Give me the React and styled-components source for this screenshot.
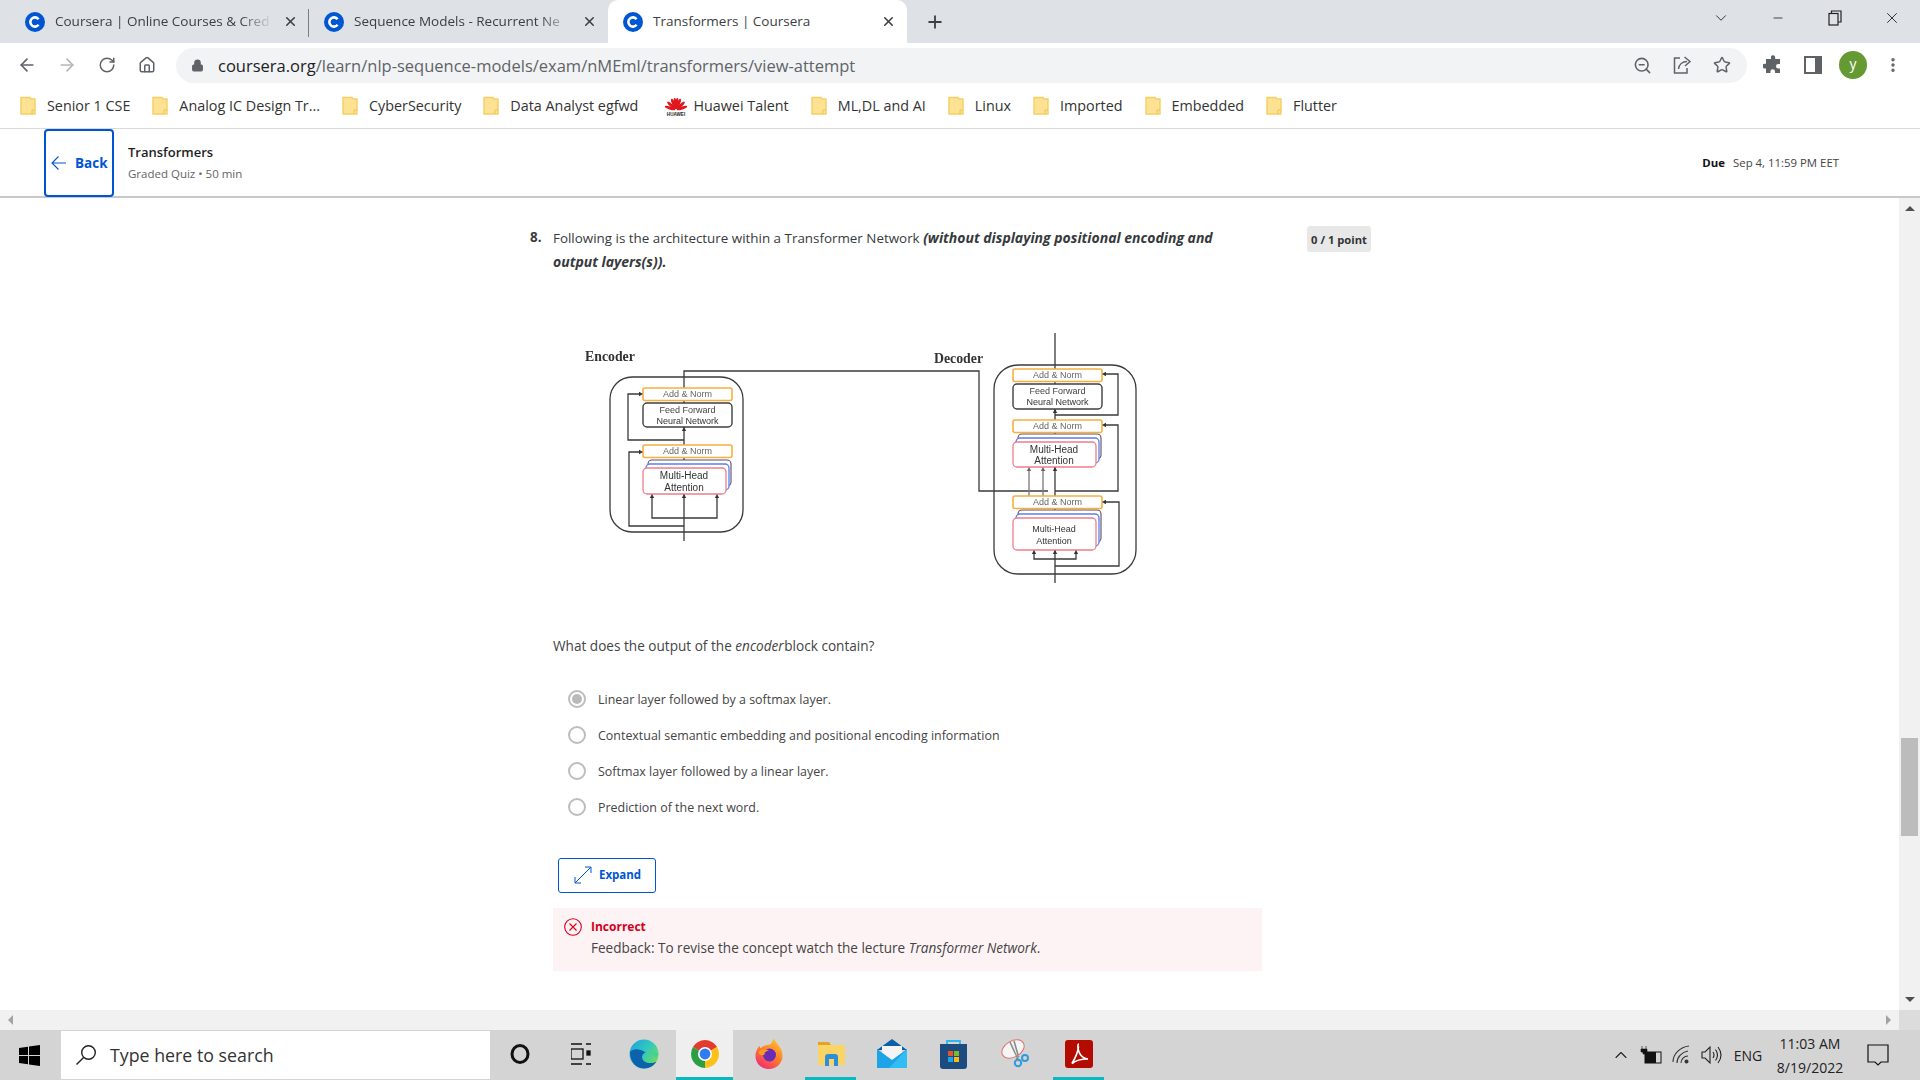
import React from "react";
import styled, { createGlobalStyle } from "styled-components";
import { ArrowLeft, ArrowRight, RotateCw, Home, Lock, ZoomOut, Star, MoreVertical, X, Plus, Minus, ChevronDown, ChevronUp } from "lucide-react";

const Global = createGlobalStyle`
  html, body { margin: 0; padding: 0; background: #fff; overflow: hidden; }
  * { box-sizing: border-box; }
`;
const Screen = styled.div`
  width: 1920px; height: 1080px; display: flex; flex-direction: column; overflow: hidden;
  font-family: "Open Sans", "Liberation Sans", sans-serif; color: #333;
`;
const TabStrip = styled.div`
  height: 43px; background: #dee1e6; display: flex; align-items: stretch; padding-left: 10px; flex: none;
`;
const Tab = styled.div`
  width: 299px; display: flex; align-items: center; padding-left: 15px; padding-right: 11px; gap: 10px;
  background: ${p => p.$active ? "#fff" : "transparent"};
  border-radius: ${p => p.$active ? "10px 10px 0 0" : "0"};
  position: relative;
  font-size: 13.5px; color: #3c4043;
`;
const TabSep = styled.div`
  width: 1px; height: 28px; background: #7a7d82; position: absolute; right: 0; top: 9px;
`;
const TabTitle = styled.span`
  flex: 1; min-width: 0; white-space: nowrap; padding-bottom: 2px;
  -webkit-mask-image: ${p => p.$fade ? "linear-gradient(90deg,#000 85%,transparent)" : "none"};
  mask-image: ${p => p.$fade ? "linear-gradient(90deg,#000 85%,transparent)" : "none"};
`;
const NewTab = styled.div`
  width: 58px; display: flex; align-items: center; justify-content: center; color: #3c4043; padding-right: 2px;
`;
const WindowControls = styled.div`
  margin-left: auto; display: flex; align-items: center; height: 36px; color: #222;
`;
const WinBtn = styled.div`
  width: 57px; display: flex; align-items: center; justify-content: center;
`;
const ToolBar = styled.div`
  height: 44px; background: #fff; display: flex; align-items: center; padding-left: 7px; flex: none;
`;
const NavBtn = styled.div`
  width: 40px; display: flex; align-items: center; justify-content: center;
  color: ${p => p.$off ? "#b4b6b9" : "#5f6368"};
`;
const Omnibox = styled.div`
  width: 1571px; height: 35px; margin-left: 9px; border-radius: 18px; background: #f1f3f4;
  display: flex; align-items: center; padding-left: 15px; color: #5f6368; flex: none;
`;
const Url = styled.div`
  margin-left: 14px; font-size: 16.5px; color: #5f6368; white-space: nowrap;
  & b { font-weight: 400; color: #202124; }
`;
const OmniIcons = styled.div`
  margin-left: auto; display: flex; padding-right: 5px; color: #5f6368;
`;
const OmniIcon = styled.div`
  width: 40px; display: flex; justify-content: center; align-items: center;
`;
const ToolRight = styled.div`
  display: flex; align-items: center; color: #5f6368; margin-left: 6px;
`;
const Avatar = styled.div`
  width: 28px; height: 28px; border-radius: 50%; background: #659a33; color: #fff; font-size: 14px;
  display: flex; align-items: center; justify-content: center; padding-bottom: 3px;
`;
const Bookmarks = styled.div`
  height: 42px; background: #fff; border-bottom: 1px solid #dadada; display: flex; align-items: center;
  padding: 0 0 4px 20px; gap: 22px; flex: none;
`;
const Bookmark = styled.div`
  display: flex; align-items: center; gap: 11px; font-size: 14.35px; color: #333; white-space: nowrap;
`;
const HuaweiMark = styled.svg`
  flex: none; width: 22px; height: 22px; margin: 0 -5px 0 5px;
`;
const CourseHeader = styled.div`
  height: 69px; border-bottom: 2px solid #c9c9c9; display: flex; align-items: stretch; padding-left: 44px; padding-right: 81px; flex: none;
`;
const BackButton = styled.div`
  width: 70px; margin-bottom: -1px; border: 2px solid #0056d2; border-radius: 4px; display: flex; align-items: center; gap: 8px; padding-left: 5px;
  color: #0056d2; font-size: 13.5px; font-weight: 700;
`;
const HeaderTitles = styled.div`
  margin-left: 14px; display: flex; flex-direction: column; justify-content: center; gap: 3px;
`;
const HeaderTitle = styled.div`
  font-size: 13px; font-weight: 600; color: #1f1f1f; line-height: 20px;
`;
const HeaderSub = styled.div`
  font-size: 11.5px; color: #636363; line-height: 18px;
`;
const Due = styled.div`
  margin-left: auto; align-self: center; font-size: 11.4px; color: #444; padding-bottom: 1px;
  & b { color: #111; margin-right: 8px; }
`;
const Viewport = styled.div`
  flex: 1; min-height: 0; display: flex;
`;
const Scroller = styled.div`
  flex: 1; min-width: 0; padding: 28px 0 0 530px; background: #fff; overflow: hidden;
`;
const VBar = styled.div`
  width: 21px; background: #f1f1f1; display: flex; flex-direction: column; align-items: center; justify-content: space-between; padding: 8px 0 8px;
`;
const VTrack = styled.div`
  flex: 1; width: 100%; padding: 0 2px; padding-top: 527px;
`;
const VThumb = styled.div`
  height: 98px; background: #bcbcbc;
`;
const Triangle = styled.div`
  width: 0; height: 0; border-style: solid;
  border-color: transparent;
  ${p => p.$dir === "up" && "border-width: 0 5px 5px 5px; border-bottom-color: #505050;"}
  ${p => p.$dir === "down" && "border-width: 5px 5px 0 5px; border-top-color: #505050;"}
  ${p => p.$dir === "left" && "border-width: 5px 5px 5px 0; border-right-color: #a3a3a3;"}
  ${p => p.$dir === "right" && "border-width: 5px 0 5px 5px; border-left-color: #a3a3a3;"}
`;
const HBar = styled.div`
  height: 20px; background: #f1f1f1; display: flex; align-items: center; justify-content: space-between; padding-left: 8px; flex: none;
`;
const Corner = styled.div`
  width: 21px; height: 20px; background: #dcdcdc; margin-left: 8px;
`;
const HEnd = styled.div`
  display: flex; align-items: center;
`;
const QuestionRow = styled.div`
  width: 841px; display: flex; align-items: flex-start;
`;
const QNumber = styled.div`
  width: 23px; font-size: 13.4px; line-height: 23px; font-weight: 700; color: #373a3c;
`;
const QText = styled.div`
  width: 670px; font-size: 13.4px; line-height: 23px; color: #373a3c;
  & em { font-weight: 700; font-size: 14px; }
`;
const PointBadge = styled.div`
  margin-left: auto; width: 64px; height: 26px; background: #e8e8e8; border-radius: 3px; font-size: 11.2px; font-weight: 700; color: #333;
  display: flex; align-items: center; justify-content: center;
`;
const Diagram = styled.svg`
  display: block; width: 600px; height: 270px; margin: 46px 0 0 30px; filter: blur(0.55px);
`;
const DText = styled.text`
  font-family: "Liberation Sans", sans-serif; font-size: ${p => p.$s || 9}px; fill: ${p => p.$c || "#333"}; text-anchor: middle;
`;
const DLabel = styled.text`
  font-family: "Liberation Serif", serif; font-weight: 700; font-size: 13.8px; fill: #333; text-anchor: start;
`;
const Body = styled.div`
  margin-left: 23px;
`;
const Prompt = styled.div`
  margin-top: 45px; font-size: 13.6px; line-height: 22px; color: #444;
  & em { margin-right: -3px; }
`;
const Options = styled.div`
  margin-top: 24px; padding-left: 15px; display: flex; flex-direction: column;
`;
const Option = styled.div`
  height: 36px; display: flex; align-items: center; gap: 12px; font-size: 12.45px; color: #444;
`;
const Radio = styled.div`
  width: 18px; height: 18px; border-radius: 50%; border: 2px solid #bdbdbd; display: flex; align-items: center; justify-content: center; flex: none;
  &::after { content: ""; width: 10px; height: 10px; border-radius: 50%; background: ${p => p.$on ? "#b9b9b9" : "transparent"}; }
`;
const ExpandBtn = styled.div`
  margin: 33px 0 0 5px; width: 98px; height: 35px; border: 1px solid #0056d2; border-radius: 3px; display: flex; align-items: center; gap: 7px; padding: 0 0 2px 15px;
  color: #0056d2; font-size: 11.5px; font-weight: 700;
`;
const Feedback = styled.div`
  margin-top: 15px; width: 709px; height: 63px; background: #fdf3f4; padding: 8px 0 0 11px; display: grid; grid-template-columns: 18px 1fr; column-gap: 9px; align-items: center; align-content: start;
`;
const FeedTitle = styled.div`
  font-size: 12px; font-weight: 700; color: #d3001c; line-height: 22px;
`;
const FeedBody = styled.div`
  grid-column: 2; font-size: 13.55px; line-height: 21px; color: #444; white-space: nowrap;
`;
const Taskbar = styled.div`
  height: 50px; background: #d4d4d4; display: flex; align-items: stretch; flex: none;
`;
const StartBtn = styled.div`
  width: 61px; display: flex; align-items: center; justify-content: center; padding-right: 2px;
`;
const SearchBox = styled.div`
  width: 429px; margin: 1px 0; background: #fff; display: flex; align-items: center; padding-left: 14px; gap: 13px; font-size: 17.8px; color: #333;
`;
const Cell = styled.div`
  width: ${p => p.$w}px; margin-left: ${p => p.$ml || 0}px; position: relative; display: flex; align-items: center; justify-content: center;
  background: ${p => p.$active ? "#efefef" : "transparent"}; padding-bottom: 3px;
  ${p => p.$line && `&::after { content: ""; position: absolute; left: 0; right: 0; bottom: 0; height: 3px; background: #0cb7c4; }`}
`;
const Tray = styled.div`
  margin-left: auto; padding-right: 13px; display: flex; align-items: center; color: #222;
`;
const TrayItem = styled.div`
  width: ${p => p.$w}px; display: flex; align-items: center; justify-content: center; font-size: ${p => p.$fs || 14}px;
`;
const Clock = styled.div`
  width: 78px; font-size: 14px; line-height: 24px; text-align: center; color: #222; padding-top: 2px;
`;

const Favicon = () => (
  <svg width="20" height="20" viewBox="0 0 20 20" style={{ flex: "none" }}>
    <circle cx="10" cy="10" r="10" fill="#0056d2" />
    <path d="M13.6 7.2A4.6 4.6 0 1 0 13.6 12.8" fill="none" stroke="#fff" strokeWidth="2.6" />
  </svg>
);
const Folder = () => (
  <svg width="16" height="19" viewBox="0 0 16 19" style={{ flex: "none" }}>
    <path d="M1 1.5h9l1 1.5h4v15H1z" fill="#fde293" stroke="#f6cf63" strokeWidth="1.4" />
    <path d="M12 18v-4h3" fill="none" stroke="#f2c14e" strokeWidth="1" />
  </svg>
);
const Huawei = () => (
  <HuaweiMark viewBox="0 0 22 22">
    <g fill="#e0181f">
      {[-72, -46, -22, -7, 7, 22, 46, 72].map(a => (
        <ellipse key={a} cx="11" cy="8.5" rx="1.5" ry="5.5" transform={`rotate(${a} 11 15)`} />
      ))}
    </g>
    <text x="11" y="21" fontSize="4.6" fontWeight="700" textAnchor="middle" fill="#222" fontFamily="Liberation Sans">HUAWEI</text>
  </HuaweiMark>
);
const ShareIcon = () => (
  <svg width="20" height="20" viewBox="0 0 20 20" fill="none" stroke="#5f6368" strokeWidth="1.5"><path d="M8 3H2.500v15h12.500v-5" /><path d="M6.500 14c.5-4.500 4-7.500 8.500-7.500" /><path d="M12.500 2 18 6.500 13 11" /></svg>
);
const PuzzleIcon = () => (
  <svg width="20" height="20" viewBox="0 0 20 20"><path fill="#5f6368" d="M8 1.500a2.200 2.200 0 0 1 4.200 1V4H17v5h-1.700a2.300 2.300 0 1 0 0 4.600H17V18h-5v-1.500a2.300 2.300 0 1 0-4.600 0V18H3v-4.600H1.700a2.300 2.300 0 1 1 0-4.600H3V4h5z" /></svg>
);
const SidePanelIcon = () => (
  <svg width="18" height="18" viewBox="0 0 18 18"><rect x="1" y="1" width="16" height="16" fill="none" stroke="#5f6368" strokeWidth="2" /><rect x="11" y="1" width="6" height="16" fill="#5f6368" /></svg>
);
const RestoreIcon = () => (
  <svg width="14" height="16" viewBox="0 0 14 16" fill="none" stroke="#222" strokeWidth="1.2"><rect x="1" y="3.500" width="9" height="11.500" /><path d="M3.500 3.500V1H13v11h-3" /></svg>
);
const WinLogo = () => (
  <svg width="21" height="21" viewBox="0 0 21 21" fill="#000"><path d="M0 3l9-1.300V10H0zM10 1.500L21 0v10H10zM0 11h9v8.300L0 18zM10 11h11v10l-11-1.500z" /></svg>
);
const SearchGlyph = () => (
  <svg width="22" height="22" viewBox="0 0 22 22" fill="none" stroke="#222" strokeWidth="1.4"><circle cx="13.500" cy="8.500" r="6.800" /><path d="M8.600 13.400 1.500 20.500" /></svg>
);
const CortanaIcon = () => (
  <svg width="20" height="22" viewBox="0 0 20 22"><ellipse cx="10" cy="11" rx="8" ry="8.500" fill="none" stroke="#111" strokeWidth="3" /></svg>
);
const TaskViewIcon = () => (
  <svg width="20" height="22" viewBox="0 0 20 22" fill="none" stroke="#111" strokeWidth="1.300"><path d="M0 1h11M0 21h11M15 1h5M15 21h5" /><rect x="0" y="6" width="12" height="10" /><rect x="16" y="8" width="3" height="4" fill="#111" /></svg>
);
const EdgeIcon = () => (
  <svg width="30" height="30" viewBox="0 0 30 30">
    <defs>
      <linearGradient id="edgeG" x1="0" y1="0" x2="1" y2="0.7"><stop offset="0" stopColor="#1f9fe0" /><stop offset="0.55" stopColor="#31c8c0" /><stop offset="1" stopColor="#6fdc5c" /></linearGradient>
    </defs>
    <circle cx="15" cy="15" r="14.500" fill="url(#edgeG)" />
    <path d="M1 13C1 24 8 29.500 15 29.500c6 0 10-3 12.500-7-3.500 2.200-11 2.500-13.500-1.500-2-3.300-.5-6.500 2.500-7.500C11 9.500 4 9 1 13z" fill="#0c62ad" />
    <path d="M16.500 13.500c4-.8 7 1 9 4.500 2 .3 3.800-1.200 3.800-3.500-3-1.800-9-4-12.800-1z" fill="#44d38f" />
  </svg>
);
const ChromeIcon = () => (
  <svg width="28" height="28" viewBox="0 0 28 28">
    <path d="M14 14 1.900 7A14 14 0 0 1 26.100 7Z" fill="#e33b2e" />
    <path d="M14 14 26.100 7A14 14 0 0 1 14 28Z" fill="#fbc116" />
    <path d="M14 14 14 28A14 14 0 0 1 1.900 7Z" fill="#2c9f45" />
    <circle cx="14" cy="14" r="7" fill="#fff" /><circle cx="14" cy="14" r="5.400" fill="#2f7cf0" />
  </svg>
);
const FirefoxIcon = () => (
  <svg width="30" height="32" viewBox="0 0 30 32">
    <defs><linearGradient id="ffG" x1="0.8" y1="0" x2="0.2" y2="1"><stop offset="0" stopColor="#ffc52f" /><stop offset="0.5" stopColor="#ff7a2a" /><stop offset="1" stopColor="#f0267a" /></linearGradient></defs>
    <path d="M15 31C7 31 1.500 25 1.500 18c0-4 1.500-7.500 4-10l1 2.500C9 7 13 7.500 17 6c1-2 2-4 3-5.500 1 3 3 4.500 5 7.500 2.500 3 3.500 6 3.500 10 0 7-6 13-13.500 13z" fill="url(#ffG)" />
    <circle cx="15.500" cy="17" r="6.500" fill="#6a2bb5" />
    <path d="M4 14c3-3 7-3.500 11-1.500-3 .5-5 2-4.500 4.500H6z" fill="#ff9a1f" />
  </svg>
);
const FilesIcon = () => (
  <svg width="28" height="24" viewBox="0 0 28 24">
    <path d="M1 0h11l2 3H1z" fill="#dfa527" /><rect x="1" y="3" width="27" height="20" fill="#fbd466" />
    <path d="M8 24V15a3 3 0 0 1 3-3h7a3 3 0 0 1 3 3v9h-4v-7h-5v7z" fill="#2e8fd8" />
  </svg>
);
const MailIcon = () => (
  <svg width="30" height="29" viewBox="0 0 30 29">
    <path d="M15 0 30 11H0z" fill="#0b5ea8" /><path d="M5 7h20v8l-10 6-10-6z" fill="#f4f4f4" />
    <path d="M0 10l15 11 15-11v19H0z" fill="#1da3e8" /><path d="M30 10v19H12z" fill="#31bdf3" />
  </svg>
);
const StoreIcon = () => (
  <svg width="29" height="30" viewBox="0 0 29 30">
    <path d="M8 5V2h13v3" fill="none" stroke="#31b5f0" strokeWidth="1.800" />
    <path d="M1 5h27v22a3 3 0 0 1-3 3H4a3 3 0 0 1-3-3z" fill="#1c4b80" />
    <rect x="9" y="12" width="5" height="5" fill="#e8522b" /><rect x="15" y="12" width="5" height="5" fill="#7db92b" />
    <rect x="9" y="18" width="5" height="5" fill="#1ea2e8" /><rect x="15" y="18" width="5" height="5" fill="#fdb813" />
  </svg>
);
const SnipIcon = () => (
  <svg width="28" height="30" viewBox="0 0 28 30">
    <ellipse cx="12" cy="10" rx="12" ry="8" transform="rotate(-30 12 10)" fill="#f5f5f5" stroke="#e27272" strokeWidth="1" />
    <path d="M13 2l4 14M9 3l5 11" stroke="#8c8c8c" strokeWidth="1.600" />
    <path d="M14 14 18 22M18 17l-3 3" stroke="#8c8c8c" strokeWidth="1.400" />
    <circle cx="17" cy="24" r="3.200" fill="none" stroke="#2f9bdc" strokeWidth="2" /><circle cx="24" cy="19" r="3" fill="none" stroke="#2f9bdc" strokeWidth="2" />
  </svg>
);
const PdfIcon = () => (
  <svg width="28" height="28" viewBox="0 0 28 28">
    <rect width="28" height="28" rx="3" fill="#b30b00" />
    <path d="M14 4c-1.500 0-1.500 4 0 8 1.500 4 5 6.500 9 7-4 0-12 1-16 4.500 3-5 6-11 6.500-17" fill="none" stroke="#fff" strokeWidth="1.700" />
  </svg>
);
const BatteryIcon = () => (
  <svg width="22" height="20" viewBox="0 0 22 20"><path d="M2 4V1M6 4V1M1 4h6v3H5v2H3V7H1z" fill="#111" stroke="#111" strokeWidth=".6" /><rect x="5" y="7" width="16" height="11" fill="none" stroke="#111" /><rect x="5" y="7" width="11" height="11" fill="#111" /></svg>
);
const WifiIcon = () => (
  <svg width="20" height="20" viewBox="0 0 20 20" fill="none" stroke="#333" strokeWidth="1.100"><path d="M1 17C1 9 8 2 17 1M5 18c0-6 5-11 11-12M9 18c0-3.500 3-7 7-7" /><circle cx="14.500" cy="16.500" r="1.500" fill="#333" /></svg>
);
const SpeakerIcon = () => (
  <svg width="22" height="20" viewBox="0 0 22 20" fill="none" stroke="#222" strokeWidth="1.100"><path d="M2 7h3l5-5v16l-5-5H2z" /><path d="M13 7q2 3 0 6M15.500 4.500q4 5.500 0 11M18 2q6 8 0 16" /></svg>
);
const NotifIcon = () => (
  <svg width="22" height="24" viewBox="0 0 22 24" fill="none" stroke="#111" strokeWidth="1.200"><path d="M1 2h20v17h-7l-3 3-3-3H1z" /></svg>
);
const BackArrow = () => (
  <svg width="16" height="16" viewBox="0 0 16 16" fill="none" stroke="#0056d2" strokeWidth="1.100" style={{ flex: "none" }}><path d="M15 8H1M7.500 1.500 1 8l6.500 6.500" /></svg>
);
const ExpandIcon = () => (
  <svg width="18" height="18" viewBox="0 0 18 18" fill="none" stroke="#0056d2" strokeWidth="1" style={{ flex: "none" }}><path d="M1 17 17 1M11 1h6v6M1 11v6h6" /></svg>
);
const ErrorIcon = () => (
  <svg width="18" height="18" viewBox="0 0 18 18" fill="none" stroke="#d3001c" strokeWidth="1.100"><circle cx="9" cy="9" r="8.300" /><path d="M5.500 5.500l7 7M12.500 5.500l-7 7" /></svg>
);

const Norm = ({ x, y, h = 12.5 }) => (
  <g>
    <rect x={x} y={y} width="89" height={h} rx="2" fill="#fff" stroke="#f5b041" strokeWidth="1.600" />
    <DText x={x + 44.5} y={y + 9.3} $c="#666" $s={9}>Add &amp; Norm</DText>
  </g>
);
const FFN = ({ x, y, h }) => (
  <g>
    <rect x={x} y={y} width="89" height={h} rx="4" fill="#fff" stroke="#3f3f3f" strokeWidth="1.400" />
    <DText x={x + 44.5} y={y + 9.5} $c="#444" $s={9}>Feed Forward</DText>
    <DText x={x + 44.5} y={y + 20.5} $c="#333" $s={9}>Neural Network</DText>
  </g>
);
const Attention = ({ x, y, h, size }) => (
  <g>
    <rect x={x + 5} y={y - 8} width="83" height={h} rx="4" fill="#fff" stroke="#5d4a66" strokeWidth="1.100" />
    <rect x={x + 3} y={y - 4} width="83" height={h} rx="4" fill="#fff" stroke="#5b7fe8" strokeWidth="1.300" />
    <rect x={x} y={y} width="83" height={h} rx="4" fill="#fff" stroke="#ef7d8c" strokeWidth="1.300" />
    <DText x={x + 41} y={y + h / 2 - 2} $s={size}>Multi-Head</DText>
    <DText x={x + 41} y={y + h / 2 + 9.5} $s={size}>Attention</DText>
  </g>
);
const Arrow = ({ x, y, dir = "up", c = "#333" }) => {
  const pts = dir === "up" ? `${x - 2.2},${y + 4} ${x + 2.2},${y + 4} ${x},${y}`
    : dir === "right" ? `${x - 4},${y - 2.2} ${x - 4},${y + 2.2} ${x},${y}`
    : `${x + 4},${y - 2.2} ${x + 4},${y + 2.2} ${x},${y}`;
  return <polygon points={pts} fill={c} />;
};

const TransformerDiagram = () => (
  <Diagram viewBox="560 320 600 270">
    <DLabel x="585" y="361">Encoder</DLabel>
    <DLabel x="934" y="363">Decoder</DLabel>
    <g fill="none" stroke="#3a3a3a" strokeWidth="1.300">
      <rect x="610" y="377" width="133" height="155" rx="22" />
      <rect x="994" y="365" width="142" height="209" rx="24" />
      <path d="M684 541V371H979V491H1048" />
      <path d="M684 440H628V394H640M684 526H629V452H640" />
      <path d="M652 498V518H717V498" />
      <path d="M1055 333V583" />
      <path d="M1055 415H1118V374H1106M1055 491H1118V425H1106M1055 566H1119V502H1106" />
      <path d="M1034 553V559H1076V553" />
    </g>
    <g fill="none" stroke="#7a7a7a" strokeWidth="1.300"><path d="M1029 471V496M1043 471V496" /></g>
    <Attention x={643} y={468} h={26} size={10} />
    <Attention x={1013} y={442} h={25} size={10} />
    <Attention x={1013} y={518} h={32} size={9} />
    <Norm x={643} y={388} />
    <FFN x={643} y={403} h={24} />
    <Norm x={643} y={445} />
    <Norm x={1013} y={369} />
    <FFN x={1013} y={384} h={25} />
    <Norm x={1013} y={420} />
    <Norm x={1013} y={496} />
    <g>
      <Arrow x={643} y={394} dir="right" /><Arrow x={643} y={452} dir="right" />
      <Arrow x={652} y={494} /><Arrow x={684} y={494} /><Arrow x={717} y={494} />
      <Arrow x={684} y={427} />
      <Arrow x={1102} y={374} dir="left" /><Arrow x={1102} y={425} dir="left" /><Arrow x={1102} y={502} dir="left" />
      <Arrow x={1029} y={467} c="#666" /><Arrow x={1043} y={467} c="#666" /><Arrow x={1055} y={467} />
      <Arrow x={1034} y={550} /><Arrow x={1055} y={550} /><Arrow x={1076} y={550} />
      <Arrow x={1055} y={409} />
    </g>
  </Diagram>
);

const bookmarks = ["Senior 1 CSE", "Analog IC Design Tr...", "CyberSecurity", "Data Analyst egfwd", "Huawei Talent", "ML,DL and AI", "Linux", "Imported", "Embedded", "Flutter"];
const options = ["Linear layer followed by a softmax layer.", "Contextual semantic embedding and positional encoding information", "Softmax layer followed by a linear layer.", "Prediction of the next word."];

export default function App() {
  return (
    <Screen>
      <Global />
      <TabStrip>
        <Tab><Favicon /><TabTitle $fade>Coursera | Online Courses &amp; Cred</TabTitle><X size={15} strokeWidth={2.5} /><TabSep /></Tab>
        <Tab><Favicon /><TabTitle $fade>Sequence Models - Recurrent Ne</TabTitle><X size={15} strokeWidth={2.5} /></Tab>
        <Tab $active><Favicon /><TabTitle>Transformers | Coursera</TabTitle><X size={15} strokeWidth={2.5} /></Tab>
        <NewTab><Plus size={20} strokeWidth={2.2} /></NewTab>
        <WindowControls>
          <WinBtn><ChevronDown size={18} strokeWidth={1.2} /></WinBtn>
          <WinBtn><Minus size={14} strokeWidth={1.4} /></WinBtn>
          <WinBtn><RestoreIcon /></WinBtn>
          <WinBtn><X size={18} strokeWidth={1.2} /></WinBtn>
        </WindowControls>
      </TabStrip>
      <ToolBar>
        <NavBtn><ArrowLeft size={20} /></NavBtn>
        <NavBtn $off><ArrowRight size={20} /></NavBtn>
        <NavBtn><RotateCw size={18} /></NavBtn>
        <NavBtn><Home size={18} /></NavBtn>
        <Omnibox>
          <Lock size={13} fill="#5f6368" />
          <Url><b>coursera.org</b>/learn/nlp-sequence-models/exam/nMEml/transformers/view-attempt</Url>
          <OmniIcons>
            <OmniIcon><ZoomOut size={19} /></OmniIcon>
            <OmniIcon><ShareIcon /></OmniIcon>
            <OmniIcon><Star size={18} /></OmniIcon>
          </OmniIcons>
        </Omnibox>
        <ToolRight>
          <OmniIcon><PuzzleIcon /></OmniIcon>
          <OmniIcon><SidePanelIcon /></OmniIcon>
          <OmniIcon><Avatar>y</Avatar></OmniIcon>
          <OmniIcon><MoreVertical size={18} strokeWidth={2.6} /></OmniIcon>
        </ToolRight>
      </ToolBar>
      <Bookmarks>
        {bookmarks.map(b => (
          <Bookmark key={b}>{b === "Huawei Talent" ? <Huawei /> : <Folder />}{b}</Bookmark>
        ))}
      </Bookmarks>
      <CourseHeader>
        <BackButton><BackArrow />Back</BackButton>
        <HeaderTitles>
          <HeaderTitle>Transformers</HeaderTitle>
          <HeaderSub>Graded Quiz • 50 min</HeaderSub>
        </HeaderTitles>
        <Due><b>Due</b>Sep 4, 11:59 PM EET</Due>
      </CourseHeader>
      <Viewport>
        <Scroller>
          <QuestionRow>
            <QNumber>8.</QNumber>
            <QText>Following is the architecture within a Transformer Network <em>(without displaying positional encoding and output layers(s)).</em></QText>
            <PointBadge>0 / 1 point</PointBadge>
          </QuestionRow>
          <TransformerDiagram />
          <Body>
            <Prompt>What does the output of the <em>encoder</em> block contain?</Prompt>
            <Options>
              {options.map((o, i) => (
                <Option key={o}><Radio $on={i === 0} />{o}</Option>
              ))}
            </Options>
            <ExpandBtn><ExpandIcon />Expand</ExpandBtn>
            <Feedback>
              <ErrorIcon />
              <FeedTitle>Incorrect</FeedTitle>
              <FeedBody>Feedback: To revise the concept watch the lecture <em>Transformer Network</em>.</FeedBody>
            </Feedback>
          </Body>
        </Scroller>
        <VBar>
          <Triangle $dir="up" />
          <VTrack><VThumb /></VTrack>
          <Triangle $dir="down" />
        </VBar>
      </Viewport>
      <HBar>
        <Triangle $dir="left" />
        <HEnd><Triangle $dir="right" /><Corner /></HEnd>
      </HBar>
      <Taskbar>
        <StartBtn><WinLogo /></StartBtn>
        <SearchBox><SearchGlyph />Type here to search</SearchBox>
        <Cell $w={60}><CortanaIcon /></Cell>
        <Cell $w={61}><TaskViewIcon /></Cell>
        <Cell $w={65}><EdgeIcon /></Cell>
        <Cell $w={57} $active $line><ChromeIcon /></Cell>
        <Cell $w={63} $ml={4}><FirefoxIcon /></Cell>
        <Cell $w={51} $ml={5} $line><FilesIcon /></Cell>
        <Cell $w={62} $ml={5}><MailIcon /></Cell>
        <Cell $w={61}><StoreIcon /></Cell>
        <Cell $w={62}><SnipIcon /></Cell>
        <Cell $w={51} $ml={7} $line><PdfIcon /></Cell>
        <Tray>
          <TrayItem $w={28}><ChevronUp size={20} strokeWidth={1.3} /></TrayItem>
          <TrayItem $w={32}><BatteryIcon /></TrayItem>
          <TrayItem $w={30}><WifiIcon /></TrayItem>
          <TrayItem $w={28}><SpeakerIcon /></TrayItem>
          <TrayItem $w={46}>ENG</TrayItem>
          <Clock>11:03 AM<br />8/19/2022</Clock>
          <TrayItem $w={58}><NotifIcon /></TrayItem>
        </Tray>
      </Taskbar>
    </Screen>
  );
}
